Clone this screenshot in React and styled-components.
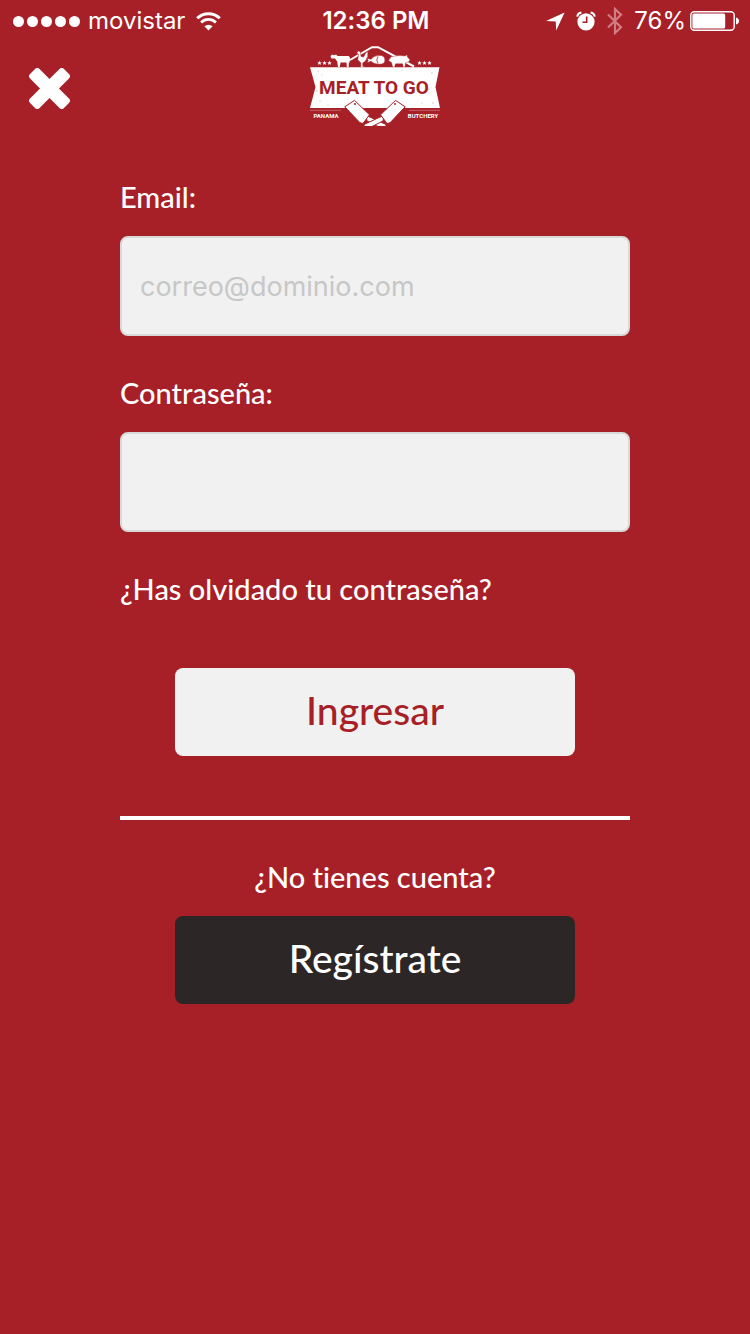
import React from "react";
import styled, { createGlobalStyle } from "styled-components";

const RED = "#a71f27";
const LIGHT = "#f1f1f1";
const DARK = "#2d2627";

const GlobalStyle = createGlobalStyle`
  *, *::before, *::after { box-sizing: border-box; }
  body {
    margin: 0;
    background: ${RED};
    color: #fff;
    font-family: Lato, "Open Sans", sans-serif;
    font-variant-ligatures: none;
  }
`;

const Screen = styled.div`
  min-height: 100vh;
  background: ${RED};
`;

const StatusBar = styled.div`
  display: grid;
  grid-template-columns: 1fr auto 1fr;
  align-items: center;
  height: 42px;
  padding: 0 11px 0 13px;
  font-family: Inter, "Liberation Sans", sans-serif;
  font-size: 24px;
  line-height: 40px;
`;

const StatusGroup = styled.div`
  display: flex;
  align-items: center;
  justify-content: ${(p) => (p.$end ? "flex-end" : "flex-start")};
  gap: ${(p) => p.$gap}px;
`;

const Clock = styled.time`
  font-weight: 600;
`;

const Signal = styled.div`
  display: flex;
  gap: 3px;
`;

const Dot = styled.span`
  width: 11px;
  height: 11px;
  border-radius: 50%;
  background: #fff;
`;

const Header = styled.header`
  display: grid;
  grid-template-columns: 1fr auto 1fr;
  align-items: center;
  height: 92px;
  padding: 0 29px;
`;

const CloseButton = styled.button`
  display: flex;
  justify-self: start;
  padding: 0;
  border: 0;
  background: none;
  color: #fff;
  cursor: pointer;
`;

const Brand = styled.div`
  display: flex;
  padding-bottom: 4px;
`;

const Form = styled.form`
  display: flex;
  flex-direction: column;
  align-items: stretch;
  padding: 46px 16%;
`;

const Field = styled.div`
  display: flex;
  flex-direction: column;
  gap: 22px;
  margin-bottom: 40px;
`;

const Label = styled.label`
  font-size: 29px;
  font-weight: 500;
  line-height: 34px;
`;

const TextInput = styled.input`
  width: 100%;
  height: 100px;
  padding: 0 18px;
  border: 2px solid #d9d9d9;
  border-radius: 8px;
  background: ${LIGHT};
  color: ${DARK};
  font-family: Inter, "Liberation Sans", sans-serif;
  font-size: 27px;
  &::placeholder { color: #c7c7c7; opacity: 1; }
`;

const ForgotLink = styled.a`
  align-self: flex-start;
  color: #fff;
  font-size: 29px;
  font-weight: 500;
  line-height: 34px;
  text-decoration: none;
`;

const ActionButton = styled.button`
  align-self: center;
  width: 400px;
  max-width: 100%;
  height: 88px;
  padding: 0 0 4px;
  border: 0;
  border-radius: 8px;
  background: ${(p) => (p.$dark ? DARK : LIGHT)};
  color: ${(p) => (p.$dark ? "#fff" : RED)};
  font-family: inherit;
  font-size: 39px;
  font-weight: 500;
  line-height: 48px;
  cursor: pointer;
`;

const LoginButton = styled(ActionButton)`
  margin-top: 62px;
`;

const Divider = styled.hr`
  width: 100%;
  height: 4px;
  margin: 60px 0 40px;
  border: 0;
  background: #fff;
`;

const Prompt = styled.p`
  margin: 0 0 22px;
  font-size: 29px;
  font-weight: 500;
  line-height: 34px;
  text-align: center;
`;

function WifiIcon() {
  return (
    <svg width="25" height="19" viewBox="0 0 25 19" fill="none" stroke="#fff" aria-hidden="true">
      <path d="M1.2 6.3A16 16 0 0 1 23.8 6.3" strokeWidth="3" />
      <path d="M5.1 10.4A10.5 10.5 0 0 1 19.9 10.4" strokeWidth="2.8" />
      <path d="M12.5 18.6 8.4 14.3A5.9 5.9 0 0 1 16.6 14.3Z" fill="#fff" stroke="none" />
    </svg>
  );
}

function LocationIcon() {
  return (
    <svg width="19" height="19" viewBox="0 0 19 19" fill="#fff" aria-hidden="true">
      <path d="M18.6.4 10.2 18.6 9.7 9.5 0 9Z" />
    </svg>
  );
}

function AlarmIcon() {
  return (
    <svg width="20" height="20" viewBox="0 0 20 20" fill="none" aria-hidden="true">
      <circle cx="10" cy="10.8" r="8.6" fill="#fff" />
      <path d="M1.2 5.6Q1.8 2.2 5.4 1.6M18.8 5.6Q18.2 2.2 14.6 1.6" stroke="#fff" strokeWidth="2" />
      <path d="M10.7 5.5V11.2H6.5" stroke={RED} strokeWidth="1.6" />
    </svg>
  );
}

function BluetoothIcon() {
  return (
    <svg width="16" height="28" viewBox="0 0 16 28" fill="none" stroke="#d17d82" strokeWidth="2.2" aria-hidden="true">
      <path d="M1 7.5 14 20.3 8 26V2L14 7.7 1 20.5" />
    </svg>
  );
}

function BatteryIcon() {
  return (
    <svg width="49" height="20" viewBox="0 0 49 20" aria-hidden="true">
      <rect x=".8" y=".8" width="43.4" height="18.4" rx="3.5" fill="none" stroke="#fff" strokeWidth="1.4" />
      <rect x="2.4" y="2.5" width="32.8" height="15" rx="1.5" fill="#fff" />
      <path d="M46 6.5Q49 7.5 49 10T46 13.5Z" fill="#fff" />
    </svg>
  );
}

function CloseIcon() {
  return (
    <svg width="41" height="41" viewBox="0 0 41 41" fill="currentColor" aria-hidden="true">
      <g transform="rotate(45 20.5 20.5)">
        <rect x="-3.5" y="13.8" width="48" height="13.4" rx="3.2" />
        <rect x="13.8" y="-3.5" width="13.4" height="48" rx="3.2" />
      </g>
    </svg>
  );
}

const LogoText = styled.text`
  font-family: Roboto, "Liberation Sans", sans-serif;
  font-weight: 700;
  text-anchor: middle;
`;

function Star({ x }) {
  return <path transform={`translate(${x} 17)`} d="M0-2.2.6-.7 2.1-.6 1 .4 1.3 1.9 0 1.1-1.3 1.9-1 .4-2.1-.6-.6-.7Z" />;
}

function Logo() {
  return (
    <svg width="130" height="80" viewBox="0 0 130 80" fill="#fff" role="img" aria-label="Meat To Go, Panama Butchery">
      <path d="M40 14 62 1.2H68L104 20.5" fill="none" stroke="#fff" strokeWidth="2" />
      {[9.5, 14.5, 19.5, 109.5, 114.5, 119.5].map((x) => <Star key={x} x={x} />)}
      <path d="M20.5 10.2 22 8.6 24 9.2 26 8.6 27.5 10H38.5Q40.2 10.3 40 13V17.5L39 14.5 38.6 21H36.8L36.5 16.5H30.5L29.8 21H28L27.2 15.5 25 12.5 21.5 12.5Z" />
      <path d="M46.5 7.2 48.5 4.8 50.5 6.2 51 10.5 53.5 11 56 6.5 57.8 5.5V10.5L55.5 15 52.8 17V20.5H54.5V21.5H50.8V16.8L47.8 14 48.5 8Z" stroke={RED} strokeWidth=".5" />
      <path d="M56.8 12 61 13.3Q64 9.5 69 9.3 75 9.3 75 14 75 18.5 69 18.3 64 18.3 61 15.3L57 17 58.2 14.5Z" stroke={RED} strokeWidth=".6" />
      <path d="M68 10.5Q65.5 14 68 17.4" stroke={RED} strokeWidth=".8" fill="none" />
      <path d="M78.5 14.5 81 10.8Q88 8.8 95 10L97 8.8 97.4 11 100 13.8 98.5 16 95.5 16.7 95 21H93.2L92.6 17.8H85.5L84.6 21H82.7L81.5 16.5Z" stroke={RED} strokeWidth=".4" />
      <path d="M0 21.3H129.5L125.5 41 130 62H0L5.5 41Z" />
      <g fill={RED} opacity=".3">
        <circle cx="8" cy="25" r=".7" /><circle cx="12" cy="29" r=".5" /><circle cx="7" cy="45" r=".8" />
        <circle cx="10" cy="55" r=".7" /><circle cx="122" cy="27" r=".8" /><circle cx="119" cy="43" r=".7" />
        <circle cx="123" cy="57" r=".8" /><circle cx="18" cy="59" r=".6" /><circle cx="112" cy="57" r=".6" />
        <circle cx="30" cy="23" r=".5" /><circle cx="92" cy="24" r=".6" /><circle cx="71" cy="23" r=".5" />
      </g>
      <LogoText x="64" y="48" fontSize="19" fill={RED}>MEAT TO GO</LogoText>
      <g stroke={RED} strokeWidth="1">
        <path d="M56 69.5 61 71.5 76 78.5V81H69L57 75Z" />
        <path d="M74 69.5 69 71.5 54 78.5V81H61L73 75Z" />
        <path d="M34.8 60.8 44.5 54.4 59.5 68.8 53 77.5 50 76.8Z" />
        <path d="M95.2 60.8 85.5 54.4 70.5 68.8 77 77.5 80 76.8Z" />
      </g>
      <g fill={RED}><circle cx="45" cy="58" r="1" /><circle cx="85" cy="58" r="1" /></g>
      <path d="M0 64.3H31M99 64.3H130" stroke="#fff" strokeWidth=".5" opacity=".6" />
      <LogoText x="16" y="72" fontSize="6">PANAMA</LogoText>
      <LogoText x="113" y="72" fontSize="6">BUTCHERY</LogoText>
    </svg>
  );
}

export default function App() {
  return (
    <>
      <GlobalStyle />
      <Screen>
        <StatusBar>
          <StatusGroup $gap={11}>
            <StatusGroup $gap={8}>
              <Signal>{[1, 2, 3, 4, 5].map((n) => <Dot key={n} />)}</Signal>
              <span>movistar</span>
            </StatusGroup>
            <WifiIcon />
          </StatusGroup>
          <Clock>12:36 PM</Clock>
          <StatusGroup $end $gap={11}>
            <LocationIcon />
            <AlarmIcon />
            <BluetoothIcon />
            <StatusGroup $gap={4}>
              <span>76%</span>
              <BatteryIcon />
            </StatusGroup>
          </StatusGroup>
        </StatusBar>
        <Header>
          <CloseButton type="button" aria-label="Cerrar"><CloseIcon /></CloseButton>
          <Brand><Logo /></Brand>
        </Header>
        <Form onSubmit={(e) => e.preventDefault()}>
          <Field>
            <Label htmlFor="email">Email:</Label>
            <TextInput id="email" type="email" placeholder="correo@dominio.com" />
          </Field>
          <Field>
            <Label htmlFor="password">Contraseña:</Label>
            <TextInput id="password" type="password" />
          </Field>
          <ForgotLink href="#recuperar">¿Has olvidado tu contraseña?</ForgotLink>
          <LoginButton type="submit">Ingresar</LoginButton>
          <Divider />
          <Prompt>¿No tienes cuenta?</Prompt>
          <ActionButton type="button" $dark>Regístrate</ActionButton>
        </Form>
      </Screen>
    </>
  );
}
